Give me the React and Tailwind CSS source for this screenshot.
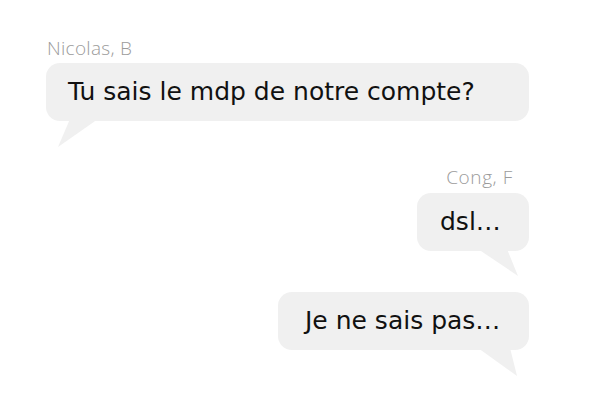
import React from 'react'

const msgFont = { fontFamily: '"DejaVu Sans", Verdana, sans-serif' }

function Tail({ className, points }) {
  return (
    <svg className={`absolute ${className}`} width="46" height="31" viewBox="0 0 46 31">
      <polygon points={points} fill="#f0f0f0" />
    </svg>
  )
}

function Label({ children, className = '' }) {
  return (
    <div className={`font-['Open_Sans',sans-serif] font-light text-[19px] leading-[22px] tracking-[0.3px] text-[#9b9b9b] ${className}`}>
      {children}
    </div>
  )
}

function Bubble({ width, pad, tail, children }) {
  return (
    <div className={`relative h-[58px] rounded-[14px] bg-[#f0f0f0] ${width}`}>
      {tail}
      <div
        className={`relative text-[25px] leading-[58px] text-[#111] whitespace-nowrap ${pad}`}
        style={msgFont}
      >
        {children}
      </div>
    </div>
  )
}

export default function App() {
  return (
    <div className="w-[595px] h-[417px] bg-white pt-[37px] pl-[46px] pr-[66px] overflow-hidden">
      <Label className="pl-[1px]">Nicolas, B</Label>
      <div className="mt-[4px]">
        <Bubble
          width="w-[483px]"
          pad="pl-[22px]"
          tail={<Tail className="left-[9px] top-[54px]" points="15,2 43,2 3,30" />}
        >
          Tu sais le mdp de notre compte?
        </Bubble>
      </div>

      <div className="mt-[45px] flex flex-col items-end">
        <Label className="mr-[16px] tracking-[0.6px]">Cong, F</Label>
        <div className="mt-[5px]">
          <Bubble
            width="w-[112px]"
            pad="pl-[23px]"
            tail={<Tail className="left-[58px] top-[54px]" points="3,2 32,2 43,29" />}
          >
            dsl…
          </Bubble>
        </div>
        <div className="mt-[41px]">
          <Bubble
            width="w-[251px]"
            pad="pl-[27px]"
            tail={<Tail className="left-[197px] top-[54px]" points="3,2 35,2 42,30" />}
          >
            Je ne sais pas…
          </Bubble>
        </div>
      </div>
    </div>
  )
}
